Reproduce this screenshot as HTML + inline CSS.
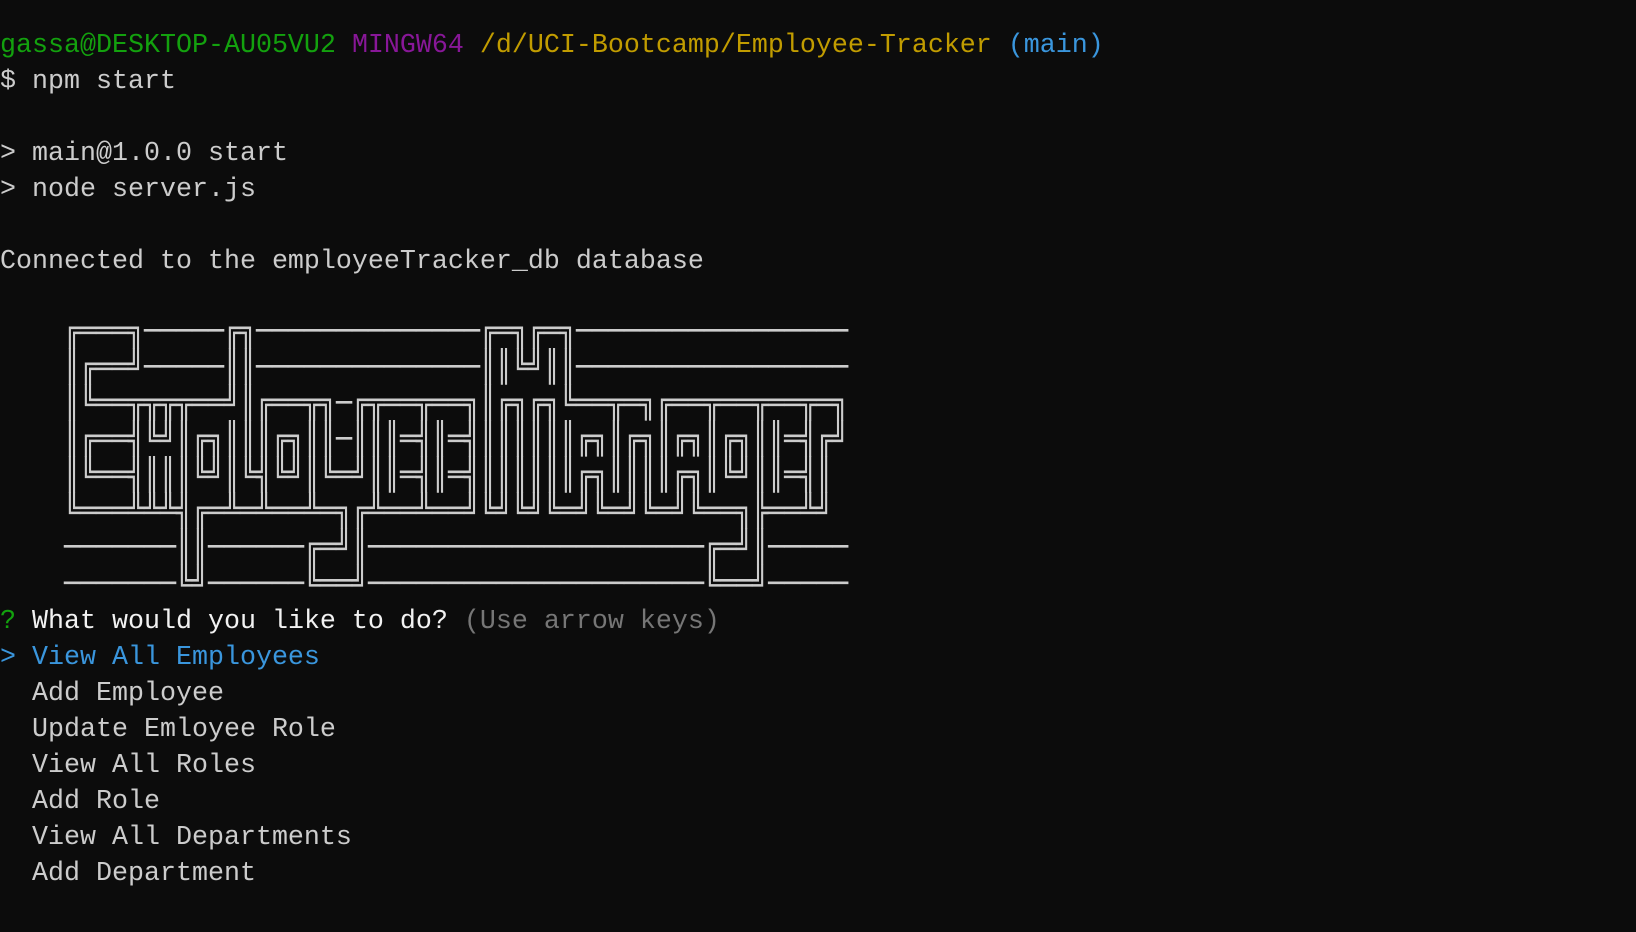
<!DOCTYPE html>
<html><head><meta charset="utf-8"><style>
html,body{margin:0;padding:0;background:#0c0c0c;width:1636px;height:932px;overflow:hidden}
pre{margin:0;font-family:"Liberation Mono","DejaVu Sans Mono",monospace;font-size:26.67px;line-height:36px;color:#cccccc;position:absolute;left:0;top:28px;white-space:pre}
.g{color:#13a10e}.p{color:#881798}.y{color:#c19c00}.b{color:#3a96dd}.w{color:#f2f2f2}.d{color:#767676}
#art{position:absolute;left:0;top:314px;font-family:"DejaVu Sans Mono",monospace;font-size:26.58px;line-height:30.94px;color:#cccccc;transform:scaleY(1.1636);transform-origin:0 0;margin:0;white-space:pre}
</style></head><body>
<pre><span class="g">gassa@DESKTOP-AU05VU2</span> <span class="p">MINGW64</span> <span class="y">/d/UCI-Bootcamp/Employee-Tracker</span> <span class="b">(main)</span>
$ npm start

&gt; main@1.0.0 start
&gt; node server.js

Connected to the employeeTracker_db database









<span class="g">?</span> <span class="w">What would you like to do?</span> <span class="d">(Use arrow keys)</span>
<span class="b">&gt; View All Employees</span>
  Add Employee
  Update Emloyee Role
  View All Roles
  Add Role
  View All Departments
  Add Department</pre>
<div id="art">    ╔═══╗─────╔╗──────────────╔═╗╔═╗─────────────────
    ║╔══╝─────║║──────────────║║╚╝║║─────────────────
    ║╚══╦╦╦╦══╝║╔══╦╗─╔╦══╦══╗║╔╗╔╗╚══╦═╗╔══╦══╦══╦═╗
    ║╔══╣╚╝║╔╗║║║╔╗║║─║║║═╣║═╣║║║║║║╔╗║╔╗║╔╗║╔╗║║═╣╔╝
    ║╚══╣║║║╚╝║╚╣╚╝║╚═╝║║═╣║═╣║║║║║║╔╗║║║║╔╗║╚╝║║═╣║ 
    ╚═══╩╩╩╣╔═╩═╩══╩═╗╔╩══╩══╝╚╝╚╝╚═╝╚═╝╚═╝╚══╗╠══╩╝ 
    ───────║║──────╔═╝║─────────────────────╔═╝║─────
    ───────╚╝──────╚══╝─────────────────────╚══╝─────</div>
</body></html>
